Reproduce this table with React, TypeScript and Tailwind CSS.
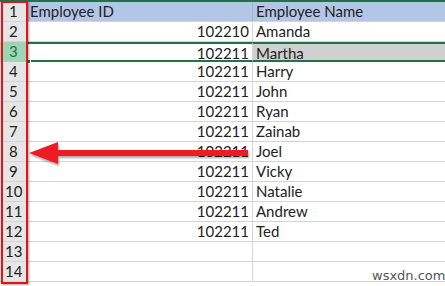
const ROWS: { id?: string; name?: string }[] = [
  { id: "102210", name: "Amanda" },
  { id: "102211", name: "Martha" },
  { id: "102211", name: "Harry" },
  { id: "102211", name: "John" },
  { id: "102211", name: "Ryan" },
  { id: "102211", name: "Zainab" },
  { id: "102211", name: "Joel" },
  { id: "102211", name: "Vicky" },
  { id: "102211", name: "Natalie" },
  { id: "102211", name: "Andrew" },
  { id: "102211", name: "Ted" },
  {},
  {},
];

export default function App() {
  return (
    <div
      className="relative w-[445px] h-[286px] overflow-hidden bg-white text-[15px] text-[#222]"
      style={{ fontFamily: "Lato, 'Open Sans', sans-serif" }}
    >
      <div className="h-[2px] bg-[#217346]" />
      {/* Header row */}
      <div className="flex h-[20px] border-b border-[#d4d4d4]">
        <div className="w-[27px] shrink-0 bg-[#e6e6e6] border-r border-[#bdbdbd] pl-[9px] leading-[19px]">1</div>
        <div className="w-[226px] shrink-0 bg-[#b4c6e7] border-r border-[#9fb3d6] pl-[3px] leading-[19px]">Employee ID</div>
        <div className="flex-1 bg-[#b4c6e7] pl-[3px] leading-[19px]">Employee Name</div>
      </div>
      {ROWS.map((r, i) => {
        const n = i + 2;
        const sel = n === 3;
        return (
          <div
            key={n}
            className={`flex h-[20px] ${sel ? "" : "border-b border-[#d4d4d4]"}`}
          >
            <div
              className={`w-[27px] shrink-0 border-r leading-[19px] ${
                n > 9 ? "pl-[5px]" : "pl-[9px]"
              } ${sel ? "bg-[#9fd5b7] text-[#217346] border-[#217346]" : "bg-[#e6e6e6] border-[#bdbdbd]"}`}
            >
              {n}
            </div>
            <div
              className={`w-[226px] shrink-0 border-r border-[#d4d4d4] text-right pr-[3px] leading-[19px] ${
                sel ? "border-y-2 border-y-[#217346] leading-[15px]" : ""
              }`}
            >
              {r.id}
            </div>
            <div
              className={`flex-1 pl-[3px] leading-[19px] ${
                sel ? "border-y-2 border-y-[#217346] bg-[#d0d0d0] leading-[15px]" : ""
              }`}
            >
              {r.name}
            </div>
          </div>
        );
      })}
      {/* fill handle */}
      <div className="absolute left-[26px] top-[59px] w-[5px] h-[5px] bg-[#217346] border border-white" />
      {/* red highlight box around row headers */}
      <div className="absolute left-[1px] top-[1px] w-[27px] h-[283px] border-2 border-[#e3131b] shadow-[1px_1px_2px_rgba(0,0,0,0.35)]" />
      {/* arrow */}
      <svg className="absolute left-[26px] top-[138px]" width="230" height="32" viewBox="0 0 230 32">
        <defs>
          <filter id="sh" x="-5%" y="-30%" width="110%" height="160%">
            <feDropShadow dx="1" dy="2" stdDeviation="1.2" floodColor="#000" floodOpacity="0.35" />
          </filter>
        </defs>
        <g filter="url(#sh)">
          <polygon points="3,15 32,4 32,12 222,12 222,18 32,18 32,26" fill="#ed1c24" />
        </g>
      </svg>
      <div
        className="absolute left-[372px] top-[266px] text-[13px] text-[#555]"
        style={{ fontFamily: "'DejaVu Sans', sans-serif" }}
      >
        wsxdn.com
      </div>
    </div>
  );
}
